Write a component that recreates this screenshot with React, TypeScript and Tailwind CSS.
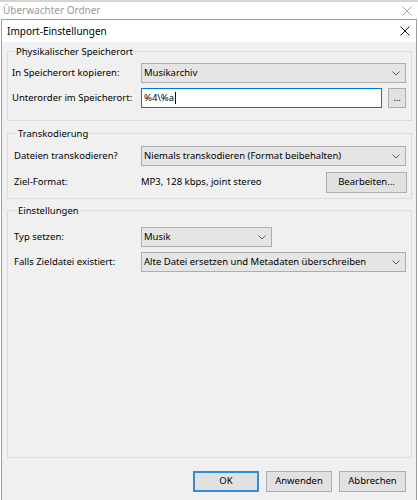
import React from "react";

function Chevron() {
  return (
    <svg width="8" height="5" viewBox="0 0 8 5" className="shrink-0">
      <path d="M0.5 0.5 L4 4 L7.5 0.5" fill="none" stroke="#5a5a5a" strokeWidth="1" />
    </svg>
  );
}

function CloseX({ color }: { color: string }) {
  return (
    <svg width="10" height="10" viewBox="0 0 10 10">
      <path d="M0.5 0.5 L9.5 9.5 M9.5 0.5 L0.5 9.5" stroke={color} strokeWidth="1" />
    </svg>
  );
}

function Combo({ value, width }: { value: string; width: string }) {
  return (
    <div
      className={`flex h-[20px] items-center justify-between border border-[#adadad] bg-[#e5e5e5] pl-[2px] pr-[5px] ${width}`}
    >
      <span>{value}</span>
      <Chevron />
    </div>
  );
}

function Row({
  label,
  labelWidth,
  children,
}: {
  label: string;
  labelWidth: string;
  children: React.ReactNode;
}) {
  return (
    <div className="flex items-center">
      <div className={`shrink-0 ${labelWidth}`}>{label}</div>
      {children}
    </div>
  );
}

function GroupLabel({ text }: { text: string }) {
  return (
    <div className="-mt-[7px] ml-[3px] h-[13px] w-fit bg-[#f0f0f0] px-[1px] leading-[13px]">
      {text}
    </div>
  );
}

export default function App() {
  return (
    <div className="relative h-[500px] w-[418px] overflow-hidden bg-white font-['Noto_Sans',sans-serif] text-[9.5px] text-black">
      {/* background window title */}
      <div className="flex h-[19px] items-center justify-between border-t-2 border-[#d4d4d4] pl-[3px] pr-[6px] text-[#9a9a9a]">
        <span className="text-[10px]">Überwachter Ordner</span>
        <CloseX color="#a8a8a8" />
      </div>

      {/* dialog */}
      <div className="ml-[1px] flex h-[481px] w-[416px] flex-col border-x border-t border-[#a0a0a0] bg-[#f0f0f0]">
        <div className="flex h-[22px] shrink-0 items-center justify-between bg-white pl-[5px] pr-[6px]">
          <span className="text-[10px]">Import-Einstellungen</span>
          <CloseX color="#1a1a1a" />
        </div>

        {/* Physikalischer Speicherort */}
        <div className="ml-[5px] mt-[9px] w-[405px] border border-[#dcdcdc] pb-[12px] pl-[4px] pr-[4px]">
          <GroupLabel text="Physikalischer Speicherort" />
          <div className="mt-[5px] flex flex-col gap-[5px]">
            <Row label="In Speicherort kopieren:" labelWidth="w-[129px]">
              <Combo value="Musikarchiv" width="w-[265px]" />
            </Row>
            <Row label="Unterorder im Speicherort:" labelWidth="w-[129px]">
              <div className="flex h-[20px] w-[241px] items-center border border-[#0078d7] bg-white pl-[2px]">
                <span>%4\%a</span>
                <span className="ml-[1px] h-[12px] w-[1px] bg-black" />
              </div>
              <div className="ml-[6px] flex h-[20px] w-[18px] items-center justify-center border border-[#adadad] bg-[#e1e1e1] leading-none">
                ...
              </div>
            </Row>
          </div>
        </div>

        {/* Transkodierung */}
        <div className="ml-[5px] mt-[12px] w-[405px] border border-[#dcdcdc] pb-[5px] pl-[6px] pr-[4px]">
          <GroupLabel text="Transkodierung" />
          <div className="mt-[6px] flex flex-col gap-[6px]">
            <Row label="Dateien transkodieren?" labelWidth="w-[127px]">
              <Combo value="Niemals transkodieren (Format beibehalten)" width="w-[265px]" />
            </Row>
            <Row label="Ziel-Format:" labelWidth="w-[127px]">
              <div className="flex-1">MP3, 128 kbps, joint stereo</div>
              <div className="flex h-[21px] w-[81px] items-center justify-center border border-[#adadad] bg-[#e1e1e1]">
                Bearbeiten...
              </div>
            </Row>
          </div>
        </div>

        {/* Einstellungen */}
        <div className="ml-[5px] mt-[11px] w-[405px] border border-[#dcdcdc] pb-[185px] pl-[6px] pr-[4px]">
          <GroupLabel text="Einstellungen" />
          <div className="mt-[10px] flex flex-col gap-[5px]">
            <Row label="Typ setzen:" labelWidth="w-[127px]">
              <Combo value="Musik" width="w-[131px]" />
            </Row>
            <Row label="Falls Zieldatei existiert:" labelWidth="w-[127px]">
              <Combo value="Alte Datei ersetzen und Metadaten überschreiben" width="w-[265px]" />
            </Row>
          </div>
        </div>

        <div className="mt-[13px] flex justify-end gap-[7px] pr-[10px]">
          <div className="flex h-[21px] w-[66px] items-center justify-center border-2 border-[#2f8ddc] bg-[#e1e1e1]">
            OK
          </div>
          <div className="flex h-[21px] w-[66px] items-center justify-center border border-[#adadad] bg-[#e1e1e1]">
            Anwenden
          </div>
          <div className="flex h-[21px] w-[67px] items-center justify-center border border-[#adadad] bg-[#e1e1e1]">
            Abbrechen
          </div>
        </div>
      </div>
    </div>
  );
}
